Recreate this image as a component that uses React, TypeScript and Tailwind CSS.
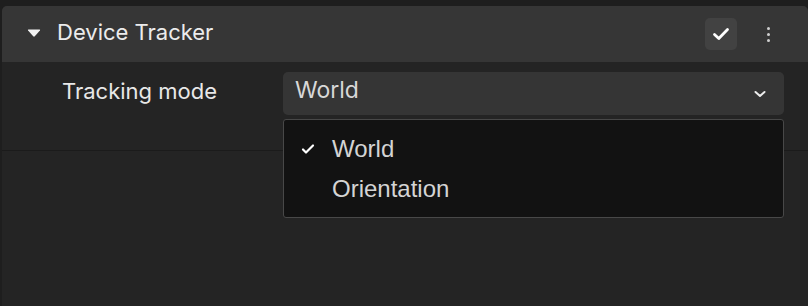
import React from "react";

export default function App() {
  return (
    <div
      className="w-[808px] h-[306px] bg-[#1e1e1e] pt-[6px] pl-[2px] overflow-hidden relative"
      style={{ fontFamily: "Inter, 'Noto Sans', sans-serif" }}
    >
      <div className="bg-[#242424] h-full rounded-tl-[5px] rounded-tr-[5px]">
        {/* header */}
        <div className="h-[56px] bg-[#363636] rounded-tl-[5px] rounded-tr-[5px] flex items-center pl-[24px] pr-[38px]">
          <svg width="16" height="10" viewBox="0 0 16 10" className="shrink-0 -mt-[2px]">
            <path d="M2.5 1.5 H13.5 Q14.6 1.5 13.9 2.4 L8.8 8.3 Q8 9.2 7.2 8.3 L2.1 2.4 Q1.4 1.5 2.5 1.5 Z" fill="#f2f2f2" />
          </svg>
          <span className="ml-[15px] text-[22px] text-[#ececec] leading-none -mt-[4px]">Device Tracker</span>
          <div className="ml-auto flex items-center">
            <div className="w-[32px] h-[32px] rounded-[5px] bg-[#424242] flex items-center justify-center">
              <svg width="18" height="14" viewBox="0 0 18 14">
                <path d="M2.5 7.5 L6.8 11.5 L15.5 2.5" stroke="#ffffff" strokeWidth="2.8" fill="none" strokeLinecap="round" strokeLinejoin="round" />
              </svg>
            </div>
            <div className="ml-[30px] flex flex-col gap-[3px] items-center">
              <span className="block w-[3px] h-[3px] rounded-full bg-[#cfcfcf]" />
              <span className="block w-[3px] h-[3px] rounded-full bg-[#cfcfcf]" />
              <span className="block w-[3px] h-[3px] rounded-full bg-[#cfcfcf]" />
            </div>
          </div>
        </div>
        {/* body row */}
        <div className="h-[89px] border-b border-[#1b1b1b] flex items-start pt-[10px] pl-[60px]">
          <div className="w-[221px] h-[43px] flex items-center pb-[4px] text-[22px] text-[#e8e8e8]">Tracking mode</div>
          <div className="w-[501px] h-[43px] rounded-[5px] bg-[#353535] flex items-center pl-[12px] pr-[18px] pb-[6px]">
            <span className="text-[23px] text-[#d8d8d8]">World</span>
            <svg width="12" height="8" viewBox="0 0 12 8" className="ml-auto mt-[6px]">
              <path d="M1.5 2 L6 6 L10.5 2" stroke="#ededed" strokeWidth="2" fill="none" strokeLinecap="round" strokeLinejoin="round" />
            </svg>
          </div>
        </div>
      </div>
      {/* dropdown */}
      <div
        className="absolute left-[283px] top-[119px] w-[501px] h-[99px] bg-[#121212] border border-[#484848] rounded-[3px] pt-[9px]"
        style={{ fontFamily: "'Liberation Sans', Arial, sans-serif" }}
      >
        <div className="h-[40px] flex items-center">
          <svg width="14" height="12" viewBox="0 0 14 12" className="ml-[17px]">
            <path d="M2 6.5 L5 9.5 L12 2.5" stroke="#ffffff" strokeWidth="2.2" fill="none" strokeLinecap="round" strokeLinejoin="round" />
          </svg>
          <span className="ml-[17px] text-[24px] text-[#d4d4d4]">World</span>
        </div>
        <div className="h-[40px] flex items-center">
          <span className="ml-[48px] text-[24px] text-[#d4d4d4]">Orientation</span>
        </div>
      </div>
    </div>
  );
}
